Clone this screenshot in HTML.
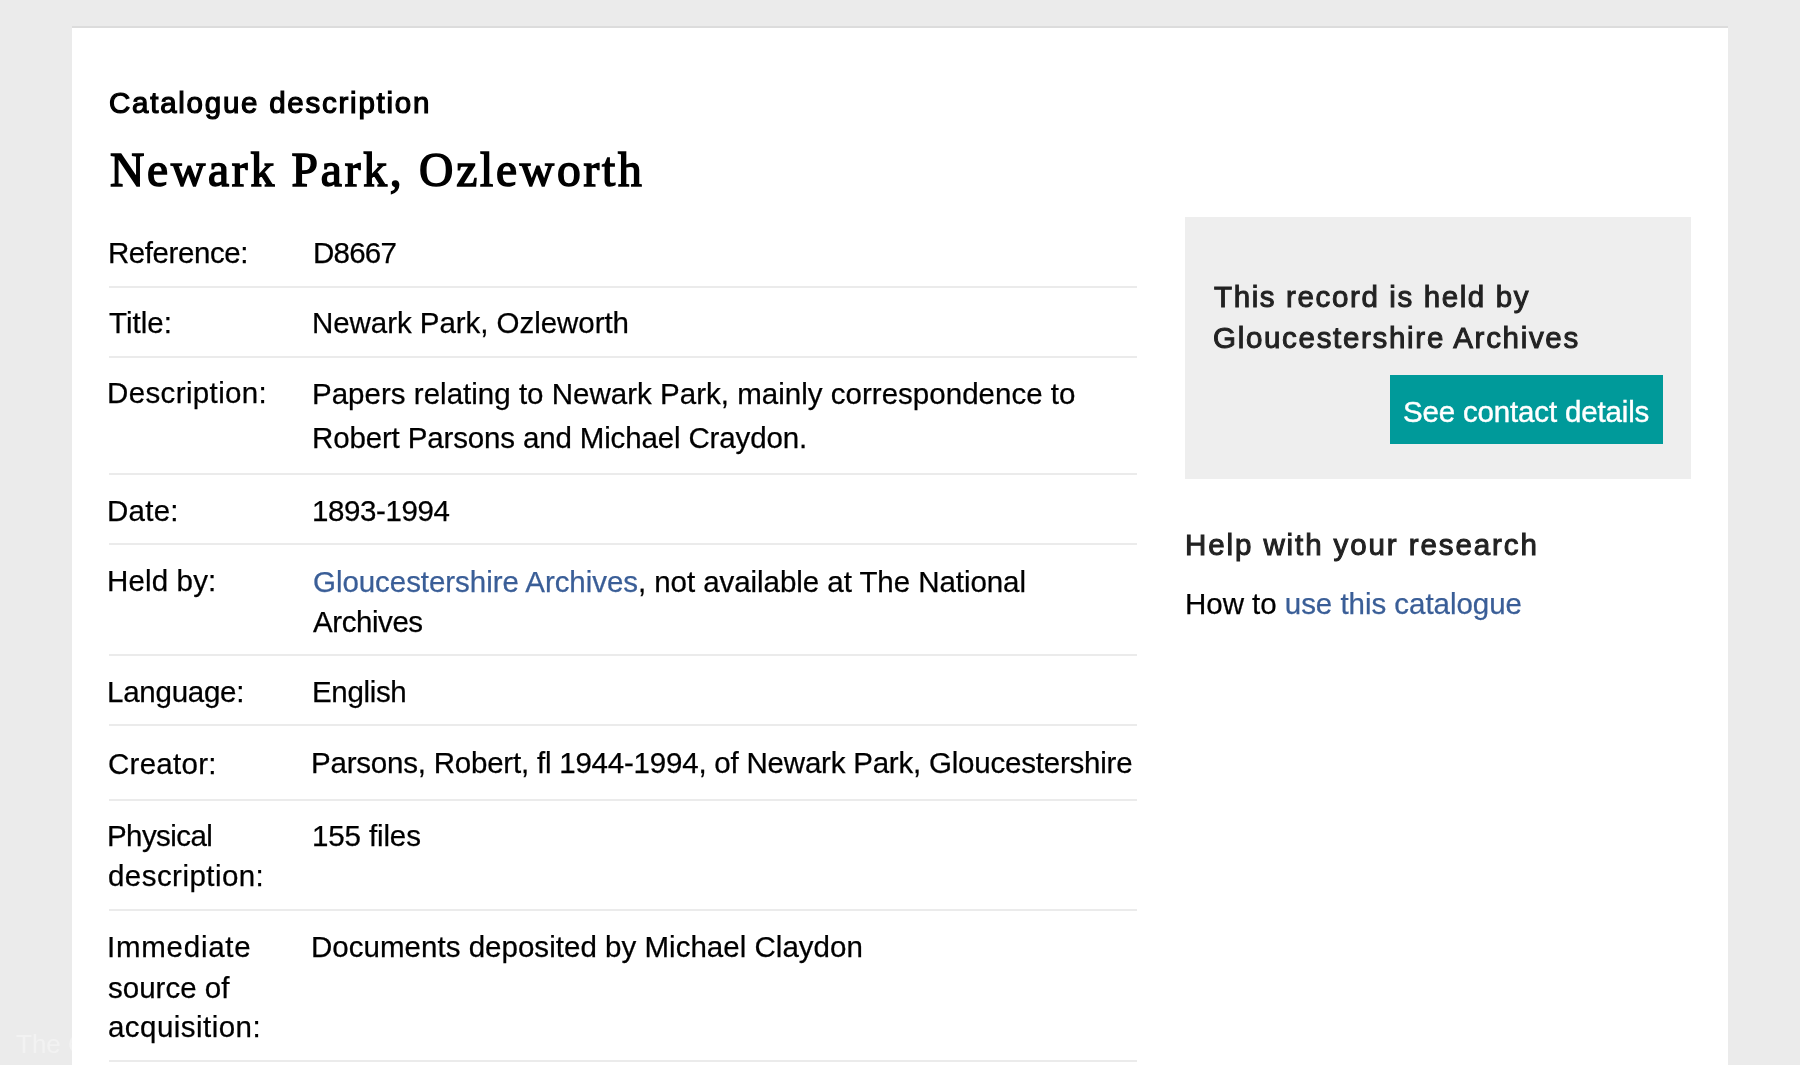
<!DOCTYPE html>
<html><head><meta charset="utf-8"><title>Newark Park, Ozleworth</title>
<style>
html,body{margin:0;padding:0;}
body>div{z-index:1}
body{width:1800px;height:1065px;overflow:hidden;background:#ebebeb;position:relative;font-family:"Liberation Sans", sans-serif;}
.t{position:absolute;white-space:nowrap;line-height:normal;z-index:2;will-change:transform}
#wm{z-index:0}
.sep{position:absolute;left:109px;width:1028px;height:2px;background:#ebebeb;}
</style></head><body>
<div style="position:absolute;left:72px;top:26px;width:1656px;height:2px;background:#dcdcdc"></div>
<div style="position:absolute;left:72px;top:28px;width:1656px;height:1037px;background:#fff;z-index:1"></div>
<div style="position:absolute;left:1185px;top:217px;width:506px;height:262px;background:#eeeeee"></div>
<div style="position:absolute;left:1390px;top:375px;width:273px;height:69px;background:#009a9a"></div>
<div class="sep" style="top:285.5px"></div>
<div class="sep" style="top:356.0px"></div>
<div class="sep" style="top:473.0px"></div>
<div class="sep" style="top:543.0px"></div>
<div class="sep" style="top:654.4px"></div>
<div class="sep" style="top:724.0px"></div>
<div class="sep" style="top:798.5px"></div>
<div class="sep" style="top:909.0px"></div>
<div class="sep" style="top:1060.3px"></div>
<div class="t" id="cat" style="left:109.00px;top:86.30px;font-size:29.5px;font-weight:400;color:#000;font-family:'Liberation Sans', sans-serif;letter-spacing:1.750px;-webkit-text-stroke:1.2px currentColor">Catalogue description</div>
<div class="t" id="h1" style="left:110.10px;top:142.98px;font-size:47.5px;font-weight:400;color:#000;font-family:'Liberation Serif', serif;letter-spacing:2.772px;-webkit-text-stroke:1.5px currentColor">Newark Park, Ozleworth</div>
<div class="t" id="l1" style="left:108.30px;top:235.60px;font-size:29.5px;font-weight:400;color:#000;font-family:'Liberation Sans', sans-serif;letter-spacing:-0.439px;-webkit-text-stroke:0.25px currentColor">Reference:</div>
<div class="t" id="v1" style="left:312.50px;top:236.30px;font-size:29.5px;font-weight:400;color:#000;font-family:'Liberation Sans', sans-serif;letter-spacing:-0.750px;-webkit-text-stroke:0.25px currentColor">D8667</div>
<div class="t" id="l2" style="left:108.90px;top:305.90px;font-size:29.5px;font-weight:400;color:#000;font-family:'Liberation Sans', sans-serif;letter-spacing:-0.000px;-webkit-text-stroke:0.25px currentColor">Title:</div>
<div class="t" id="v2" style="left:312.00px;top:306.26px;font-size:29.5px;font-weight:400;color:#000;font-family:'Liberation Sans', sans-serif;letter-spacing:-0.051px;-webkit-text-stroke:0.25px currentColor">Newark Park, Ozleworth</div>
<div class="t" id="l3" style="left:107.00px;top:375.75px;font-size:29.5px;font-weight:400;color:#000;font-family:'Liberation Sans', sans-serif;letter-spacing:0.369px;-webkit-text-stroke:0.25px currentColor">Description:</div>
<div class="t" id="v3a" style="left:311.50px;top:376.75px;font-size:29.5px;font-weight:400;color:#000;font-family:'Liberation Sans', sans-serif;letter-spacing:0.018px;-webkit-text-stroke:0.25px currentColor">Papers relating to Newark Park, mainly correspondence to</div>
<div class="t" id="v3b" style="left:312.00px;top:420.90px;font-size:29.5px;font-weight:400;color:#000;font-family:'Liberation Sans', sans-serif;letter-spacing:-0.147px;-webkit-text-stroke:0.25px currentColor">Robert Parsons and Michael Craydon.</div>
<div class="t" id="l4" style="left:107.00px;top:493.75px;font-size:29.5px;font-weight:400;color:#000;font-family:'Liberation Sans', sans-serif;letter-spacing:0.250px;-webkit-text-stroke:0.25px currentColor">Date:</div>
<div class="t" id="v4" style="left:312.00px;top:493.75px;font-size:29.5px;font-weight:400;color:#000;font-family:'Liberation Sans', sans-serif;letter-spacing:-0.385px;-webkit-text-stroke:0.25px currentColor">1893-1994</div>
<div class="t" id="l5" style="left:107.00px;top:563.90px;font-size:29.5px;font-weight:400;color:#000;font-family:'Liberation Sans', sans-serif;letter-spacing:0.145px;-webkit-text-stroke:0.25px currentColor">Held by:</div>
<div class="t" id="v5a" style="left:312.60px;top:565.30px;font-size:29.5px;font-weight:400;color:#000;font-family:'Liberation Sans', sans-serif;letter-spacing:-0.056px;-webkit-text-stroke:0.25px currentColor"><span style="color:#3a5e97">Gloucestershire Archives</span>, not available at The National</div>
<div class="t" id="v5b" style="left:313.00px;top:605.26px;font-size:29.5px;font-weight:400;color:#000;font-family:'Liberation Sans', sans-serif;letter-spacing:-0.429px;-webkit-text-stroke:0.25px currentColor">Archives</div>
<div class="t" id="l6" style="left:107.00px;top:674.75px;font-size:29.5px;font-weight:400;color:#000;font-family:'Liberation Sans', sans-serif;letter-spacing:-0.250px;-webkit-text-stroke:0.25px currentColor">Language:</div>
<div class="t" id="v6" style="left:312.00px;top:675.09px;font-size:29.5px;font-weight:400;color:#000;font-family:'Liberation Sans', sans-serif;letter-spacing:-0.330px;-webkit-text-stroke:0.25px currentColor">English</div>
<div class="t" id="l7" style="left:108.00px;top:746.80px;font-size:29.5px;font-weight:400;color:#000;font-family:'Liberation Sans', sans-serif;letter-spacing:0.278px;-webkit-text-stroke:0.25px currentColor">Creator:</div>
<div class="t" id="v7" style="left:311.00px;top:745.90px;font-size:29.5px;font-weight:400;color:#000;font-family:'Liberation Sans', sans-serif;letter-spacing:-0.213px;-webkit-text-stroke:0.25px currentColor">Parsons, Robert, fl 1944-1994, of Newark Park, Gloucestershire</div>
<div class="t" id="l8a" style="left:107.00px;top:819.26px;font-size:29.5px;font-weight:400;color:#000;font-family:'Liberation Sans', sans-serif;letter-spacing:-0.579px;-webkit-text-stroke:0.25px currentColor">Physical</div>
<div class="t" id="l8b" style="left:108.00px;top:858.90px;font-size:29.5px;font-weight:400;color:#000;font-family:'Liberation Sans', sans-serif;letter-spacing:0.451px;-webkit-text-stroke:0.25px currentColor">description:</div>
<div class="t" id="v8" style="left:312.00px;top:818.58px;font-size:29.5px;font-weight:400;color:#000;font-family:'Liberation Sans', sans-serif;letter-spacing:-0.125px;-webkit-text-stroke:0.25px currentColor">155 files</div>
<div class="t" id="l9a" style="left:107.00px;top:930.24px;font-size:29.5px;font-weight:400;color:#000;font-family:'Liberation Sans', sans-serif;letter-spacing:0.750px;-webkit-text-stroke:0.25px currentColor">Immediate</div>
<div class="t" id="l9b" style="left:108.00px;top:970.90px;font-size:29.5px;font-weight:400;color:#000;font-family:'Liberation Sans', sans-serif;letter-spacing:0.000px;-webkit-text-stroke:0.25px currentColor">source of</div>
<div class="t" id="l9c" style="left:108.00px;top:1009.75px;font-size:29.5px;font-weight:400;color:#000;font-family:'Liberation Sans', sans-serif;letter-spacing:0.455px;-webkit-text-stroke:0.25px currentColor">acquisition:</div>
<div class="t" id="v9" style="left:311.00px;top:929.90px;font-size:29.5px;font-weight:400;color:#000;font-family:'Liberation Sans', sans-serif;letter-spacing:0.025px;-webkit-text-stroke:0.25px currentColor">Documents deposited by Michael Claydon</div>
<div class="t" id="r1" style="left:1213.60px;top:280.00px;font-size:29.5px;font-weight:400;color:#222;font-family:'Liberation Sans', sans-serif;letter-spacing:1.626px;-webkit-text-stroke:1.0px currentColor">This record is held by</div>
<div class="t" id="r2" style="left:1212.60px;top:321.00px;font-size:29.5px;font-weight:400;color:#222;font-family:'Liberation Sans', sans-serif;letter-spacing:1.693px;-webkit-text-stroke:1.0px currentColor">Gloucestershire Archives</div>
<div class="t" id="btn" style="left:1403.40px;top:395.20px;font-size:29.5px;font-weight:400;color:#fff;font-family:'Liberation Sans', sans-serif;letter-spacing:-0.165px;-webkit-text-stroke:0.4px currentColor">See contact details</div>
<div class="t" id="h2" style="left:1185.00px;top:528.30px;font-size:29.5px;font-weight:400;color:#222;font-family:'Liberation Sans', sans-serif;letter-spacing:1.906px;-webkit-text-stroke:1.0px currentColor">Help with your research</div>
<div class="t" id="r3" style="left:1185.00px;top:586.80px;font-size:29.5px;font-weight:400;color:#000;font-family:'Liberation Sans', sans-serif;letter-spacing:-0.036px;-webkit-text-stroke:0.25px currentColor">How to <span style="color:#3a5e97">use this catalogue</span></div>
<div class="t" id="wm" style="left:16.00px;top:1029.47px;font-size:26px;font-weight:400;color:#f2f2f2;font-family:'Liberation Sans', sans-serif;letter-spacing:0.000px">The Cat</div>
</body></html>
